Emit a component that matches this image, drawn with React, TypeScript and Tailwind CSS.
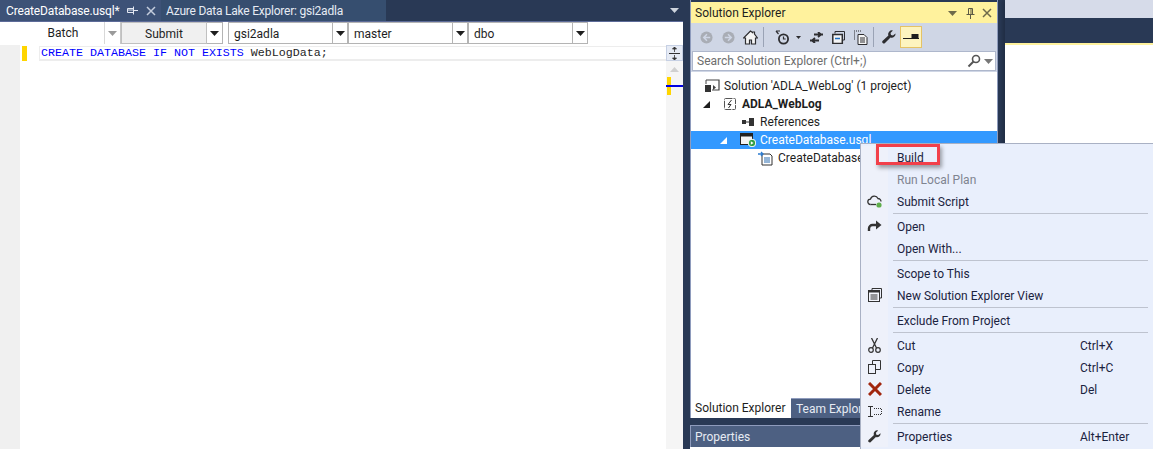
import type { ReactNode } from "react"

const ui = "font-['Roboto',sans-serif]"

function Caret({ color = "#1e1e1e" }: { color?: string }) {
  return (
    <svg width="9" height="5" viewBox="0 0 9 5">
      <path d="M0 0h9L4.5 5z" fill={color} />
    </svg>
  )
}

function Combo({ label, w }: { label: string; w: string }) {
  return (
    <div className={`flex h-[22px] ${w} border border-[#b4b4b4] bg-white`}>
      <div className="flex-1 pl-[5px] leading-[22px] text-[#1e1e1e]">{label}</div>
      <div className="flex w-[15px] items-center justify-center border-l border-[#b4b4b4]">
        <Caret />
      </div>
    </div>
  )
}

function EditorToolbar() {
  return (
    <div className="flex h-[23px] items-start bg-white pl-[22px] text-[12px]">
      <div className="flex h-[22px] w-[99px] border-r border-[#c8c8c8]">
        <div className="w-[82px] text-center leading-[22px] text-[#1e1e1e]">Batch</div>
        <div className="flex flex-1 items-center justify-center border-l border-[#d8d8d8]">
          <Caret color="#9a9a9a" />
        </div>
      </div>
      <div className="h-[22px] w-[86px] border border-[#c0c0c0] bg-[#f0f0f0] text-center leading-[22px] text-[#1e1e1e]">
        Submit
      </div>
      <div className="flex h-[22px] w-[16px] items-center justify-center border-y border-r border-[#b4b4b4]">
        <Caret />
      </div>
      <div className="w-[5px]" />
      <Combo label="gsi2adla" w="w-[120px]" />
      <Combo label="master" w="w-[120px]" />
      <Combo label="dbo" w="w-[120px]" />
    </div>
  )
}

function PinIcon({ color, horizontal }: { color: string; horizontal?: boolean }) {
  return (
    <svg width="11" height="11" viewBox="0 0 11 11" className={horizontal ? "-rotate-90" : ""}>
      <path d="M3.500 .5h4v6h-4zM6 1v5M1.500 6.500h8M5.500 7v4" fill="none" stroke={color} />
    </svg>
  )
}

function CloseIcon({ color }: { color: string }) {
  return (
    <svg width="10" height="10" viewBox="0 0 10 10">
      <path d="M1 1l8 8M9 1l-8 8" stroke={color} strokeWidth="1.5" />
    </svg>
  )
}

function Editor() {
  return (
    <div className="flex w-[683px] flex-col">
      <div className={`flex h-[21px] items-start text-[12px] text-white ${ui}`}>
        <div className="flex h-[21px] w-[161px] items-center bg-[#3d5277] pl-[6px]">
          <span className="w-[121px] whitespace-nowrap tracking-[-0.15px]">CreateDatabase.usql*</span>
          <PinIcon color="#e3e8f2" horizontal />
          <span className="w-[8px]" />
          <CloseIcon color="#c4cddd" />
        </div>
        <div className="flex h-[21px] w-[225px] items-center whitespace-nowrap bg-[#364e6f] pl-[5px] tracking-[-0.23px] text-[#e6ebf3]">
          Azure Data Lake Explorer: gsi2adla
        </div>
        <div className="flex h-full flex-1 items-center justify-end pr-[4px]">
          <Caret color="#ced4dd" />
        </div>
      </div>
      <div className="h-[1px] bg-[#5d6b99]" />
      <div className={ui}>
        <EditorToolbar />
      </div>
      <div className="flex flex-1 bg-white">
        <div className="w-[20px] bg-[#f0f0f0]" />
        <div className="w-[2px]" />
        <div className="mt-[1px] h-[15px] w-[5px] bg-[#ffd500]" />
        <div className="flex-1 pl-[12px] pt-[1px]">
          <div className="h-[15px] border-t border-b-2 border-l border-[#ededed] pl-[1px] font-['Liberation_Mono',monospace] text-[11.67px] leading-[12px]">
            <span className="text-[#0000ff]">CREATE DATABASE IF NOT EXISTS</span>
            <span className="text-[#1e1e1e]"> WebLogData;</span>
          </div>
        </div>
        <div className="relative w-[17px] bg-[#f5f5f5]">
          <div className="flex h-[16px] items-center justify-center border border-[#c6d0e4] bg-[#e6ebf5]">
            <svg width="11" height="13" viewBox="0 0 11 13">
              <path d="M0 6.500h11" stroke="#333" />
              <path d="M5.500 0v5M3.500 2h4L5.500 0zM5.500 8v5M3.500 11h4l-2 2z" stroke="#333" strokeWidth=".8" fill="#333" />
            </svg>
          </div>
          <div className="flex h-[16px] items-center justify-center">
            <svg width="9" height="5" viewBox="0 0 9 5">
              <path d="M4.500 0L9 5H0z" fill="#d0d0d0" />
            </svg>
          </div>
          <div className="absolute left-[1px] top-[32px] h-[18px] w-[4px] bg-[#ffd500]" />
          <div className="absolute left-0 top-[40px] h-[2px] w-[17px] bg-[#0000e0]" />
        </div>
      </div>
    </div>
  )
}

function Tb({ children, active }: { children: ReactNode; active?: boolean }) {
  return (
    <div className={`flex h-[22px] w-[22px] items-center justify-center ${active ? "border border-[#e5c365] bg-[#fdf4bf]" : ""}`}>
      {children}
    </div>
  )
}

function NavCircle({ dir }: { dir: "l" | "r" }) {
  return (
    <svg width="13" height="13" viewBox="0 0 14 14">
      <circle cx="7" cy="7" r="6.500" fill="#a9adb5" />
      <path d={dir === "l" ? "M7.500 3.500L4 7l3.500 3.500M4.500 7H11" : "M6.500 3.500L10 7l-3.500 3.500M9.500 7H3"} stroke="#cfd6e5" strokeWidth="1.600" fill="none" />
    </svg>
  )
}

const dark = "#2d2d30"

function SeToolbar() {
  return (
    <div className="flex h-[28px] items-center bg-[#cfd6e5] pl-[4px]">
      <Tb><NavCircle dir="l" /></Tb>
      <Tb><NavCircle dir="r" /></Tb>
      <Tb>
        <svg width="15" height="15" viewBox="0 0 15 15">
          <path d="M7.500 1L.5 8h2v6h4v-4h2v4h4V8h2L11.500 4V2h-2v.5z" fill="#f5f5f5" stroke={dark} strokeWidth="1.200" />
        </svg>
      </Tb>
      <div className="mx-[2px] h-[20px] w-[1px] bg-[#9aa3b5]" />
      <div className="flex w-[39px] items-center gap-[6px] pl-[9px]">
        <svg width="15" height="15" viewBox="0 0 15 15">
          <circle cx="8.500" cy="9" r="4.600" fill="none" stroke={dark} strokeWidth="1.800" />
          <path d="M8.500 6.500V9h2.200M1 1l2.500 3M1 1h4" stroke={dark} strokeWidth="1.200" fill="none" />
        </svg>
        <svg width="5" height="3" viewBox="0 0 5 3">
          <path d="M0 0h5L2.500 3z" fill={dark} />
        </svg>
      </div>
      <Tb>
        <svg width="13" height="11" viewBox="0 0 13 11">
          <path d="M4 2.500h9M8 0l3 2.500L8 5M9 8.500H0M5 6l-3 2.500L5 11" stroke={dark} strokeWidth="1.800" fill="none" />
        </svg>
      </Tb>
      <Tb>
        <svg width="13" height="13" viewBox="0 0 13 13">
          <path d="M3 2.500V.5h9.500V9H11" fill="none" stroke={dark} />
          <rect x=".8" y="3.500" width="9.500" height="9" fill="#f5f5f5" stroke={dark} strokeWidth="1.500" />
          <path d="M3 7.500h5" stroke="#1f6fc0" strokeWidth="1.500" />
        </svg>
      </Tb>
      <Tb>
        <svg width="15" height="15" viewBox="0 0 15 15">
          <path d="M1 1h7M1 3h1M1 5h1M1 7h1M1 9h1" stroke={dark} strokeDasharray="1 1" />
          <path d="M5 4.500h6l3 3v7H5z" fill="#f5f5f5" stroke={dark} />
          <path d="M7 8h5M7 10h5M7 12h5" stroke={dark} />
        </svg>
      </Tb>
      <div className="ml-[2px] mr-[4px] h-[20px] w-[1px] bg-[#9aa3b5]" />
      <Tb>
        <svg width="14" height="14" viewBox="0 0 14 14">
          <path d="M13.500 3.500a3.800 3.800 0 0 1-5 4L3 13a1.500 1.500 0 0 1-2.300-2.200l5.700-5.300a3.800 3.800 0 0 1 4.500-5L8.500 3l.5 2 2 .5z" fill={dark} />
        </svg>
      </Tb>
      <Tb active>
        <svg width="16" height="6" viewBox="0 0 16 6">
          <path d="M9 0h6v4H9zM0 4.500h16" stroke="#1e1e1e" fill="#1e1e1e" />
        </svg>
      </Tb>
    </div>
  )
}

function TreeRow({ indent, arrowAt, icon, selected, children }: { indent: string; arrowAt?: string; icon: ReactNode; selected?: boolean; children: ReactNode }) {
  return (
    <div className={`flex h-[18px] items-center whitespace-nowrap ${selected ? "bg-[#3399ff] text-white" : "text-[#1e1e1e]"}`}>
      <div className={`flex ${indent} ${arrowAt ?? ""} items-center`}>
        {arrowAt && (
          <svg width="7" height="7" viewBox="0 0 7 7">
            <path d="M7 0v7H0z" fill={selected ? "#fff" : "#1e1e1e"} />
          </svg>
        )}
      </div>
      <div className="flex w-[18px] items-center justify-center">{icon}</div>
      <div className="pl-[3px]">{children}</div>
    </div>
  )
}

function SolutionExplorer() {
  return (
    <div className={`flex w-[308px] flex-col border-x border-[#8e9bbc] text-[12px] ${ui}`}>
      <div className="h-[2px] bg-[#293955]" />
      <div className="flex h-[21px] items-center bg-[#fff29d] pl-[4px] pr-[5px] pt-[1px] text-[#1e1e1e]">
        <span className="flex-1">Solution Explorer</span>
        <Caret color="#6e6a4a" />
        <span className="w-[8px]" />
        <PinIcon color="#5c5a44" />
        <span className="w-[6px]" />
        <CloseIcon color="#6e6a4a" />
      </div>
      <SeToolbar />
      <div className="h-[21px] bg-[#cfd6e5] px-[1px]">
        <div className="flex h-[20px] items-center border border-[#aeb7cc] bg-white pl-[4px] pr-[2px] text-[#6d6d6d]">
          <span className="flex-1">Search Solution Explorer (Ctrl+;)</span>
          <svg width="14" height="14" viewBox="0 0 14 14">
            <circle cx="9" cy="5" r="3.500" fill="none" stroke="#555" strokeWidth="1.600" />
            <path d="M6.500 7.500L1.500 12.500" stroke="#555" strokeWidth="2" />
          </svg>
          <span className="w-[3px]" />
          <Caret color="#777" />
        </div>
      </div>
      <div className="flex-1 bg-white pt-[5px]">
        <TreeRow indent="w-[12px]" icon={
          <svg width="16" height="14" viewBox="0 0 16 14">
            <path d="M2 1h13v10H8" fill="none" stroke="#444" strokeWidth="1.200" />
            <path d="M2 1v4" stroke="#444" />
            <rect x="1" y="6" width="6" height="7" fill="#333" />
            <path d="M9 6l3 2.500L9 11z" fill="#444" />
          </svg>
        }>
          Solution 'ADLA_WebLog' (1 project)
        </TreeRow>
        <TreeRow indent="w-[30px]" arrowAt="pl-[12px]" icon={
          <svg width="14" height="14" viewBox="0 0 14 14">
            <rect x="1.500" y="1.500" width="11" height="11" rx="1" fill="none" stroke="#555" strokeDasharray="7 1" />
            <path d="M8.500 3L5 7.500h3L5.500 11" fill="none" stroke="#333" />
          </svg>
        }>
          <span className="font-bold">ADLA_WebLog</span>
        </TreeRow>
        <TreeRow indent="w-[48px]" icon={
          <svg width="12" height="8" viewBox="0 0 12 8">
            <path d="M0 2h4v4H0zM7 0h5v8H7z" fill="#333" />
            <path d="M4 4h3" stroke="#333" />
          </svg>
        }>
          References
        </TreeRow>
        <TreeRow indent="w-[48px]" arrowAt="pl-[29px]" selected icon={
          <svg width="16" height="14" viewBox="0 0 16 14">
            <rect x=".5" y=".5" width="12" height="11" fill="#f4f4f4" stroke="#222" />
            <path d="M.5 1h12v2.500H.5z" fill="#222" />
            <circle cx="12" cy="10" r="3.800" fill="#2f9e44" stroke="#fff" />
            <path d="M10.800 8.300l2.800 1.700-2.800 1.700z" fill="#fff" />
          </svg>
        }>
          CreateDatabase.usql
        </TreeRow>
        <TreeRow indent="w-[66px]" icon={
          <svg width="16" height="15" viewBox="0 0 16 15">
            <path d="M4 3h8l2 2v9H4z" fill="#fff" stroke="#333" />
            <path d="M6 7h6M6 9h6M6 11h6" stroke="#2b6cb0" />
            <path d="M0 3h4M3 1l2 2-2 2" stroke="#2b7bd0" strokeWidth="1.300" fill="none" />
          </svg>
        }>
          CreateDatabase.usql.cs
        </TreeRow>
      </div>
      <div className="flex h-[20px] items-stretch whitespace-nowrap bg-[#4d6082]">
        <div className="w-[100px] bg-white pl-[4px] leading-[20px] text-[#1e1e1e]">Solution Explorer</div>
        <div className="w-[100px] border-t border-[#8e9bbc] pl-[5px] leading-[20px] text-[#e6ebf3]">Team Explorer</div>
      </div>
    </div>
  )
}

type Item = { label?: string; shortcut?: string; icon?: ReactNode; off?: boolean; sep?: boolean }

const items: Item[] = [
  { label: "Build" },
  { label: "Run Local Plan", off: true },
  {
    label: "Submit Script",
    icon: (
      <svg width="16" height="14" viewBox="0 0 16 14">
        <path d="M3.500 10.500a2.700 2.700 0 0 1 0-5.400 4 4 0 0 1 7.500-.6 3 3 0 0 1 3 3" fill="none" stroke="#333" strokeWidth="1.300" />
        <path d="M3.500 10.500H9" stroke="#333" strokeWidth="1.300" />
        <circle cx="12" cy="11" r="2.600" fill="#5fae4b" />
      </svg>
    ),
  },
  { sep: true },
  {
    label: "Open",
    icon: (
      <svg width="15" height="12" viewBox="0 0 15 12">
        <path d="M2 11V8.500a3.500 3.500 0 0 1 3.500-3.500H11" fill="none" stroke="#333" strokeWidth="2.400" />
        <path d="M9 .5L14.500 5 9 9.500z" fill="#333" />
      </svg>
    ),
  },
  { label: "Open With..." },
  { sep: true },
  { label: "Scope to This" },
  {
    label: "New Solution Explorer View",
    icon: (
      <svg width="14" height="14" viewBox="0 0 14 14">
        <path d="M4 2V.5h9.500V10H12" fill="none" stroke="#333" />
        <rect x=".5" y="2.500" width="11" height="11" fill="#f4f6fc" stroke="#333" />
        <path d="M.5 3.500h11" stroke="#333" strokeWidth="2" />
        <path d="M2.500 7h7M2.500 9h7M2.500 11h7" stroke="#333" />
      </svg>
    ),
  },
  { sep: true },
  { label: "Exclude From Project" },
  { sep: true },
  {
    label: "Cut",
    shortcut: "Ctrl+X",
    icon: (
      <svg width="13" height="15" viewBox="0 0 13 15">
        <path d="M3.500 0l5 10M9.500 0l-5 10" stroke="#333" strokeWidth="1.300" />
        <circle cx="3" cy="12" r="2.300" fill="none" stroke="#333" strokeWidth="1.200" />
        <circle cx="10" cy="12" r="2.300" fill="none" stroke="#333" strokeWidth="1.200" />
      </svg>
    ),
  },
  {
    label: "Copy",
    shortcut: "Ctrl+C",
    icon: (
      <svg width="13" height="14" viewBox="0 0 13 14">
        <path d="M4.500 4V.5h8v9H8" fill="none" stroke="#333" />
        <rect x=".5" y="4.500" width="7" height="9" fill="none" stroke="#333" />
      </svg>
    ),
  },
  {
    label: "Delete",
    shortcut: "Del",
    icon: (
      <svg width="14" height="14" viewBox="0 0 14 14">
        <path d="M1 1l12 12M13 1L1 13" stroke="#a1260d" strokeWidth="3" />
      </svg>
    ),
  },
  {
    label: "Rename",
    icon: (
      <svg width="15" height="11" viewBox="0 0 15 11">
        <path d="M1 .5h5M1 10.500h5M3.500 .5v10" stroke="#333" />
        <path d="M7 2.500h7.500v6H7" fill="none" stroke="#333" strokeDasharray="1 1" />
      </svg>
    ),
  },
  { sep: true },
  {
    label: "Properties",
    shortcut: "Alt+Enter",
    icon: (
      <svg width="13" height="13" viewBox="0 0 14 14">
        <path d="M13.500 3.500a3.800 3.800 0 0 1-5 4L3 13a1.500 1.500 0 0 1-2.300-2.200l5.700-5.300a3.800 3.800 0 0 1 4.500-5L8.500 3l.5 2 2 .5z" fill="#333" />
      </svg>
    ),
  },
]

function ContextMenu() {
  return (
    <div className={`absolute left-[860px] top-[143px] h-[306px] w-[293px] border-l border-t border-[#a9b1c4] bg-[#e9effc] pt-[2px] text-[12px] ${ui}`}>
      {items.map((it, i) =>
        it.sep ? (
          <div key={i} className="flex h-[3px] items-center">
            <div className="h-[3px] w-[27px] bg-[#eef1fa]" />
            <div className="ml-[5px] mr-[5px] h-[1px] flex-1 bg-[#bec3cf]" />
          </div>
        ) : (
          <div key={i} className="flex h-[22px] items-center">
            <div className="flex h-[22px] w-[27px] items-center justify-center bg-[#eef1fa]">{it.icon}</div>
            <div className={`w-[192px] pl-[9px] pt-[2px] ${it.off ? "text-[#7f8490]" : "text-[#1b2340]"}`}>{it.label}</div>
            <div className="pt-[2px] text-[#1b2340]">{it.shortcut}</div>
          </div>
        )
      )}
      <div className="absolute left-[15px] top-0 h-[21px] w-[64px] border-[3px] border-[#f2404a] shadow-[2px_3px_4px_rgba(0,0,0,0.35)]" />
    </div>
  )
}

export default function App() {
  return (
    <div className="relative flex h-[449px] w-[1153px] overflow-hidden bg-[#293955]">
      <Editor />
      <div className="w-[7px]" />
      <div className="flex w-[308px] flex-col">
        <div className="flex min-h-0 flex-1">
          <SolutionExplorer />
        </div>
        <div className="h-[7px]" />
        <div className={`h-[22px] border-x border-t border-[#8e9bbc] bg-[#4d6082] pl-[4px] text-[12px] leading-[22px] text-[#e6ebf3] ${ui}`}>
          Properties
        </div>
        <div className="h-[2px] bg-white" />
      </div>
      <div className="w-[7px]" />
      <div className="flex flex-1 flex-col shadow-[-3px_0_4px_rgba(0,0,0,0.2)]">
        <div className="h-[18px] bg-[#d6dbe9]" />
        <div className="h-[25px] bg-[#293955]" />
        <div className="h-[2px] bg-[#fff29d]" />
        <div className="flex-1 bg-white" />
      </div>
      <ContextMenu />
    </div>
  )
}
